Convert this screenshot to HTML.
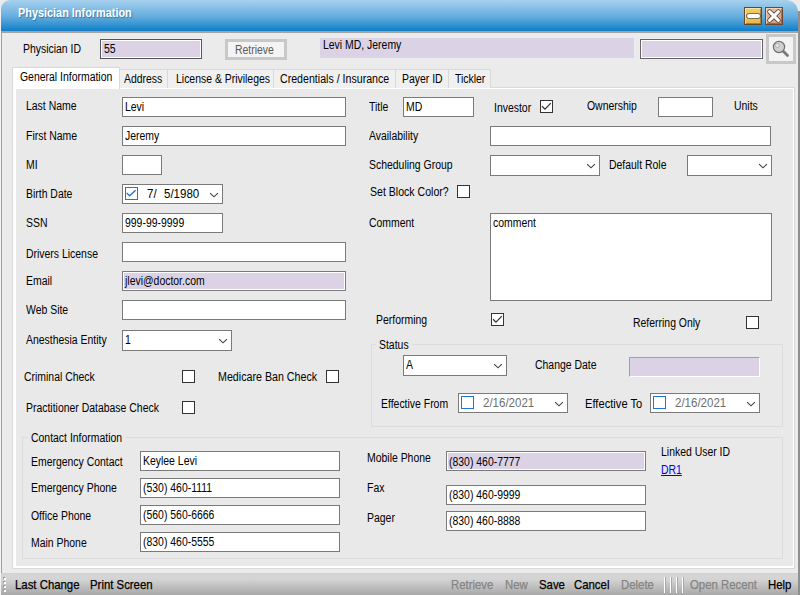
<!DOCTYPE html>
<html><head><meta charset="utf-8">
<style>
html,body{margin:0;padding:0;}
body{width:800px;height:595px;overflow:hidden;position:relative;background:#ebebeb;font-family:"Liberation Sans",sans-serif;}
.a{position:absolute;box-sizing:border-box;}
.t{position:absolute;font-size:12px;line-height:14px;white-space:nowrap;transform-origin:0 0;transform:scaleX(.87);color:#000;}
.in{position:absolute;box-sizing:border-box;background:#fff;border:1px solid #7a7a7a;}
.lav{background:#dbd3e5;box-shadow:inset 0 0 0 1px #fff;}
.cb{position:absolute;box-sizing:border-box;width:13px;height:13px;background:#fff;border:1px solid #333;}
.grp{position:absolute;box-sizing:border-box;border:1px solid #dcdcdc;}
.tab{position:absolute;box-sizing:border-box;top:69px;height:19px;background:#f0f0f0;border:1px solid #d9d9d9;border-bottom:none;}
.tb{position:absolute;font-size:13px;line-height:15px;white-space:nowrap;transform-origin:0 0;transform:scaleX(.875);color:#000;top:577px;-webkit-text-stroke:.25px currentColor;}
.dis{color:#858381;}
</style></head><body>

<!-- window chrome -->
<div class="a" style="left:0;top:0;width:800px;height:595px;background:#ebebeb;"></div>
<div class="a" style="left:0;top:10px;width:1px;height:585px;background:#f3f3f3;"></div>
<div class="a" style="left:1px;top:0;width:797px;height:31px;border-radius:9px 12px 0 0;background:linear-gradient(#a6d1ee,#62acdd 55%,#0f7ec8);"></div>
<div class="a" style="left:1px;top:31px;width:797px;height:2px;background:#a3a3a3;"></div>
<div class="a" style="left:1px;top:32px;width:1px;height:541px;background:#a0a0a0;"></div>
<div class="a" style="left:798px;top:11px;width:2px;height:584px;background:#8f8f8f;"></div>
<div class="t" style="left:18px;top:6px;font-weight:bold;color:#fff;transform:scaleX(.907);text-shadow:1px 1px 1px rgba(0,50,100,.45);">Physician Information</div>

<!-- min / close -->
<div class="a" style="left:744px;top:7px;width:18px;height:18px;background:linear-gradient(#f5cc68,#eab548);border:1px solid #5e4c30;box-shadow:inset 1px 1px 0 rgba(255,240,200,.6),inset -1px -1px 0 rgba(90,60,10,.45);"></div>
<div class="a" style="left:746.5px;top:14.3px;width:13px;height:4px;background:#fff;border-radius:2px;box-shadow:0 0 0 .8px #555;"></div>
<div class="a" style="left:765px;top:7px;width:18px;height:18px;background:linear-gradient(#f2b791,#e39a70);border:1px solid #6a4a36;box-shadow:inset 1px 1px 0 rgba(255,230,210,.55),inset -1px -1px 0 rgba(90,40,10,.45);"></div>
<svg class="a" style="left:765px;top:7px;" width="18" height="18" viewBox="0 0 18 18"><path d="M4.6 4.6 L13.4 13.4 M13.4 4.6 L4.6 13.4" stroke="#3a3a3a" stroke-width="4.6" stroke-linecap="round"/><path d="M4.6 4.6 L13.4 13.4 M13.4 4.6 L4.6 13.4" stroke="#fff" stroke-width="3.1" stroke-linecap="round"/></svg>

<!-- header row -->
<div class="t" style="left:23px;top:42px;">Physician ID</div>
<div class="in lav" style="left:100px;top:39px;width:102px;height:20px;border-color:#555;"></div>
<div class="t" style="left:104px;top:42px;">55</div>
<div class="a" style="left:225px;top:39px;width:62px;height:21px;border:3px solid #c8c8c8;background:#f4f4f4;"></div>
<div class="t" style="left:235px;top:43px;color:#5a5a5a;">Retrieve</div>
<div class="a" style="left:320px;top:38px;width:314px;height:20px;background:#dbd3e5;"></div>
<div class="t" style="left:323px;top:38px;">Levi MD, Jeremy</div>
<div class="in lav" style="left:640px;top:39px;width:123px;height:20px;border-color:#646464;"></div>
<div class="a" style="left:766px;top:34px;width:30px;height:30px;border:3px solid #c8c8c8;background:#f3f3f3;"></div>
<svg class="a" style="left:766px;top:34px;" width="30" height="30" viewBox="0 0 30 30"><line x1="17" y1="17" x2="21.5" y2="21.5" stroke="#7a7a7a" stroke-width="2.8" stroke-linecap="round"/><circle cx="13" cy="13" r="5.6" fill="#cfcfcf" stroke="#707070" stroke-width="1.2"/><circle cx="11.3" cy="11.5" r="2" fill="#e6e6e6" stroke="#a8a8a8" stroke-width=".8"/></svg>

<!-- tab control -->
<div class="a" style="left:12px;top:87px;width:783px;height:482px;border:1px solid #dadada;background:#fff;"></div>
<div class="a" style="left:16px;top:89px;width:777px;height:477px;background:#e9e9e9;"></div>
<div class="tab" style="left:119px;width:49px;"></div>
<div class="tab" style="left:167px;width:107px;"></div>
<div class="tab" style="left:273px;width:123px;"></div>
<div class="tab" style="left:395px;width:54px;"></div>
<div class="tab" style="left:448px;width:43px;"></div>
<div class="a" style="left:12px;top:67px;width:108px;height:22px;border:1px solid #d9d9d9;border-bottom:none;background:#fff;"></div>
<div class="t" style="left:20px;top:70px;">General Information</div>
<div class="t" style="left:124px;top:72px;">Address</div>
<div class="t" style="left:176px;top:72px;">License &amp; Privileges</div>
<div class="t" style="left:280px;top:72px;transform:scaleX(.885);">Credentials / Insurance</div>
<div class="t" style="left:402px;top:72px;">Payer ID</div>
<div class="t" style="left:455px;top:72px;">Tickler</div>



<div class="t" style="left:26px;top:99px;">Last Name</div>
<div class="in" style="left:122px;top:97px;width:224px;height:20px;"></div>
<div class="t" style="left:125px;top:100px;">Levi</div>
<div class="t" style="left:26px;top:128.5px;">First Name</div>
<div class="in" style="left:122px;top:126px;width:224px;height:20px;"></div>
<div class="t" style="left:125px;top:129px;">Jeremy</div>
<div class="t" style="left:26px;top:158px;">MI</div>
<div class="in" style="left:122px;top:155px;width:40px;height:20px;"></div>
<div class="t" style="left:26px;top:187px;">Birth Date</div>
<div class="in" style="left:122px;top:184px;width:101px;height:20px;"></div>
<div class="cb" style="left:125px;top:187px;border-color:#1f74d4;"></div>
<svg class="a" style="left:125px;top:187px;" width="13" height="13" viewBox="0 0 13 13"><path d="M1.7 6.1 L4.6 8.8 L10.6 3.2" fill="none" stroke="#1f74d4" stroke-width="1.35"/></svg>
<div class="t" style="left:147px;top:187px;transform:scaleX(0.96);color:#000;">7/</div>
<div class="t" style="left:163.5px;top:187px;transform:scaleX(0.96);color:#000;">5/1980</div>
<svg class="a" style="left:209px;top:191.7px;" width="10" height="6" viewBox="0 0 10 6"><path d="M1.1 1.1 L5 4.8 L8.9 1.1" fill="none" stroke="#404040" stroke-width="1.15"/></svg>
<div class="t" style="left:26px;top:216px;">SSN</div>
<div class="in" style="left:122px;top:213px;width:101px;height:20px;"></div>
<div class="t" style="left:125px;top:216px;">999-99-9999</div>
<div class="t" style="left:26px;top:247px;">Drivers License</div>
<div class="in" style="left:122px;top:242px;width:224px;height:20px;"></div>
<div class="t" style="left:26px;top:274px;">Email</div>
<div class="in lav" style="left:122px;top:271px;width:224px;height:20px;"></div>
<div class="t" style="left:125px;top:274px;">jlevi@doctor.com</div>
<div class="t" style="left:26px;top:303px;">Web Site</div>
<div class="in" style="left:122px;top:300px;width:224px;height:20px;"></div>
<div class="t" style="left:26px;top:333px;">Anesthesia Entity</div>
<div class="in" style="left:122px;top:330px;width:110px;height:21px;"></div>
<svg class="a" style="left:218px;top:338px;" width="10" height="6" viewBox="0 0 10 6"><path d="M1.1 1.1 L5 4.8 L8.9 1.1" fill="none" stroke="#404040" stroke-width="1.15"/></svg>
<div class="t" style="left:125px;top:333px;">1</div>
<div class="t" style="left:23.5px;top:370px;">Criminal Check</div>
<div class="cb" style="left:182px;top:370px;border-color:#333;"></div>
<div class="t" style="left:217.5px;top:370px;transform:scaleX(0.89);">Medicare Ban Check</div>
<div class="cb" style="left:326px;top:370px;border-color:#333;"></div>
<div class="t" style="left:25.5px;top:401px;">Practitioner Database Check</div>
<div class="cb" style="left:182px;top:401px;border-color:#333;"></div>
<div class="t" style="left:368.5px;top:99.5px;">Title</div>
<div class="in" style="left:403px;top:97px;width:71px;height:20px;"></div>
<div class="t" style="left:406px;top:100px;">MD</div>
<div class="t" style="left:494px;top:100.5px;">Investor</div>
<div class="cb" style="left:540px;top:100px;border-color:#333;"></div>
<svg class="a" style="left:540px;top:100px;" width="13" height="13" viewBox="0 0 13 13"><path d="M2 6.2 L5 9.1 L10.8 3.1" fill="none" stroke="#333" stroke-width="1.25"/></svg>
<div class="t" style="left:587px;top:99px;">Ownership</div>
<div class="in" style="left:658px;top:97px;width:55px;height:20px;"></div>
<div class="t" style="left:734px;top:99px;">Units</div>
<div class="t" style="left:369px;top:129px;">Availability</div>
<div class="in" style="left:490px;top:126px;width:281px;height:20px;"></div>
<div class="t" style="left:368.5px;top:158px;">Scheduling Group</div>
<div class="in" style="left:490px;top:155px;width:110px;height:21px;"></div>
<svg class="a" style="left:586px;top:163px;" width="10" height="6" viewBox="0 0 10 6"><path d="M1.1 1.1 L5 4.8 L8.9 1.1" fill="none" stroke="#404040" stroke-width="1.15"/></svg>
<div class="t" style="left:608.5px;top:158px;">Default Role</div>
<div class="in" style="left:687px;top:155px;width:85px;height:21px;"></div>
<svg class="a" style="left:758px;top:163px;" width="10" height="6" viewBox="0 0 10 6"><path d="M1.1 1.1 L5 4.8 L8.9 1.1" fill="none" stroke="#404040" stroke-width="1.15"/></svg>
<div class="t" style="left:369.5px;top:185px;transform:scaleX(0.88);">Set Block Color?</div>
<div class="cb" style="left:457px;top:185px;border-color:#333;"></div>
<div class="t" style="left:369px;top:216px;">Comment</div>
<div class="in" style="left:490px;top:213px;width:282px;height:88px;"></div>
<div class="t" style="left:493px;top:216px;">comment</div>
<div class="t" style="left:376px;top:313px;">Performing</div>
<div class="cb" style="left:491px;top:313px;border-color:#333;"></div>
<svg class="a" style="left:491px;top:313px;" width="13" height="13" viewBox="0 0 13 13"><path d="M2 6.2 L5 9.1 L10.8 3.1" fill="none" stroke="#333" stroke-width="1.25"/></svg>
<div class="t" style="left:633px;top:316px;">Referring Only</div>
<div class="cb" style="left:746px;top:316px;border-color:#333;"></div>
<div class="grp" style="left:371px;top:344px;width:412px;height:83px;"></div>
<div class="a" style="left:376px;top:342px;width:36px;height:5px;background:#e9e9e9;"></div>
<div class="t" style="left:379px;top:338px;">Status</div>
<div class="in" style="left:403px;top:355px;width:104px;height:21px;"></div>
<svg class="a" style="left:493px;top:363px;" width="10" height="6" viewBox="0 0 10 6"><path d="M1.1 1.1 L5 4.8 L8.9 1.1" fill="none" stroke="#404040" stroke-width="1.15"/></svg>
<div class="t" style="left:406px;top:358px;">A</div>
<div class="t" style="left:534.5px;top:358px;">Change Date</div>
<div class="in lav" style="left:629px;top:357px;width:131px;height:20px;border-color:#a0a0a0 #fff #fff #a0a0a0;box-shadow:none;"></div>
<div class="t" style="left:381px;top:397px;">Effective From</div>
<div class="in" style="left:458px;top:393px;width:110px;height:20px;"></div>
<div class="cb" style="left:461px;top:396px;border-color:#1f74d4;"></div>
<div class="t" style="left:483px;top:396px;transform:scaleX(0.96);color:#6e6e6e;">2/16/2021</div>
<svg class="a" style="left:554px;top:400.7px;" width="10" height="6" viewBox="0 0 10 6"><path d="M1.1 1.1 L5 4.8 L8.9 1.1" fill="none" stroke="#404040" stroke-width="1.15"/></svg>
<div class="t" style="left:584.5px;top:397px;transform:scaleX(0.93);">Effective To</div>
<div class="in" style="left:650px;top:393px;width:110px;height:20px;"></div>
<div class="cb" style="left:653px;top:396px;border-color:#1f74d4;"></div>
<div class="t" style="left:675px;top:396px;transform:scaleX(0.96);color:#6e6e6e;">2/16/2021</div>
<svg class="a" style="left:746px;top:400.7px;" width="10" height="6" viewBox="0 0 10 6"><path d="M1.1 1.1 L5 4.8 L8.9 1.1" fill="none" stroke="#404040" stroke-width="1.15"/></svg>
<div class="grp" style="left:22px;top:437px;width:761px;height:122px;"></div>
<div class="a" style="left:27.5px;top:435px;width:98px;height:5px;background:#e9e9e9;"></div>
<div class="t" style="left:30.5px;top:431px;">Contact Information</div>
<div class="t" style="left:31px;top:455px;">Emergency Contact</div>
<div class="in" style="left:140px;top:451px;width:200px;height:20px;"></div>
<div class="t" style="left:143px;top:454px;">Keylee Levi</div>
<div class="t" style="left:31px;top:481px;">Emergency Phone</div>
<div class="in" style="left:140px;top:478px;width:200px;height:20px;"></div>
<div class="t" style="left:143px;top:481px;">(530) 460-1111</div>
<div class="t" style="left:30.5px;top:509px;">Office Phone</div>
<div class="in" style="left:140px;top:505px;width:200px;height:20px;"></div>
<div class="t" style="left:143px;top:508px;">(560) 560-6666</div>
<div class="t" style="left:31px;top:536px;">Main Phone</div>
<div class="in" style="left:140px;top:532px;width:200px;height:20px;"></div>
<div class="t" style="left:143px;top:535px;">(830) 460-5555</div>
<div class="t" style="left:367px;top:451px;">Mobile Phone</div>
<div class="in lav" style="left:446px;top:451px;width:200px;height:20px;"></div>
<div class="t" style="left:449px;top:455px;">(830) 460-7777</div>
<div class="t" style="left:367px;top:481px;">Fax</div>
<div class="in" style="left:446px;top:485px;width:200px;height:20px;"></div>
<div class="t" style="left:449px;top:488px;">(830) 460-9999</div>
<div class="t" style="left:367px;top:511px;">Pager</div>
<div class="in" style="left:446px;top:511px;width:200px;height:20px;"></div>
<div class="t" style="left:449px;top:514px;">(830) 460-8888</div>
<div class="t" style="left:660.5px;top:445px;">Linked User ID</div>
<div class="t" style="left:661px;top:463px;color:#0000ee;text-decoration:underline;">DR1</div>
<div class="a" style="left:1px;top:573px;width:797px;height:22px;background:linear-gradient(#cfcfcf 0,#d6d6d6 8%,#d3d3d3 30%,#a8a8a8 100%);"></div>
<div class="a" style="left:4px;top:578px;width:2px;height:2px;background:#fff;box-shadow:-1px -1px 0 #999;"></div>
<div class="a" style="left:4px;top:582px;width:2px;height:2px;background:#fff;box-shadow:-1px -1px 0 #999;"></div>
<div class="a" style="left:4px;top:586px;width:2px;height:2px;background:#fff;box-shadow:-1px -1px 0 #999;"></div>
<div class="a" style="left:4px;top:590px;width:2px;height:2px;background:#fff;box-shadow:-1px -1px 0 #999;"></div>
<div class="tb" style="left:14.5px;">Last Change</div>
<div class="tb" style="left:90px;">Print Screen</div>
<div class="tb dis" style="left:451px;">Retrieve</div>
<div class="tb dis" style="left:504.5px;">New</div>
<div class="tb" style="left:539px;">Save</div>
<div class="tb" style="left:574px;">Cancel</div>
<div class="tb dis" style="left:621px;">Delete</div>
<div class="a" style="left:664px;top:577px;width:1px;height:16px;background:#fff;box-shadow:1px 0 0 #a8a8a8;"></div>
<div class="a" style="left:670px;top:577px;width:1px;height:16px;background:#fff;box-shadow:1px 0 0 #a8a8a8;"></div>
<div class="a" style="left:676px;top:577px;width:1px;height:16px;background:#fff;box-shadow:1px 0 0 #a8a8a8;"></div>
<div class="a" style="left:682px;top:577px;width:1px;height:16px;background:#fff;box-shadow:1px 0 0 #a8a8a8;"></div>
<div class="tb dis" style="left:689.5px;">Open Recent</div>
<div class="tb" style="left:768px;">Help</div>
</body></html>
